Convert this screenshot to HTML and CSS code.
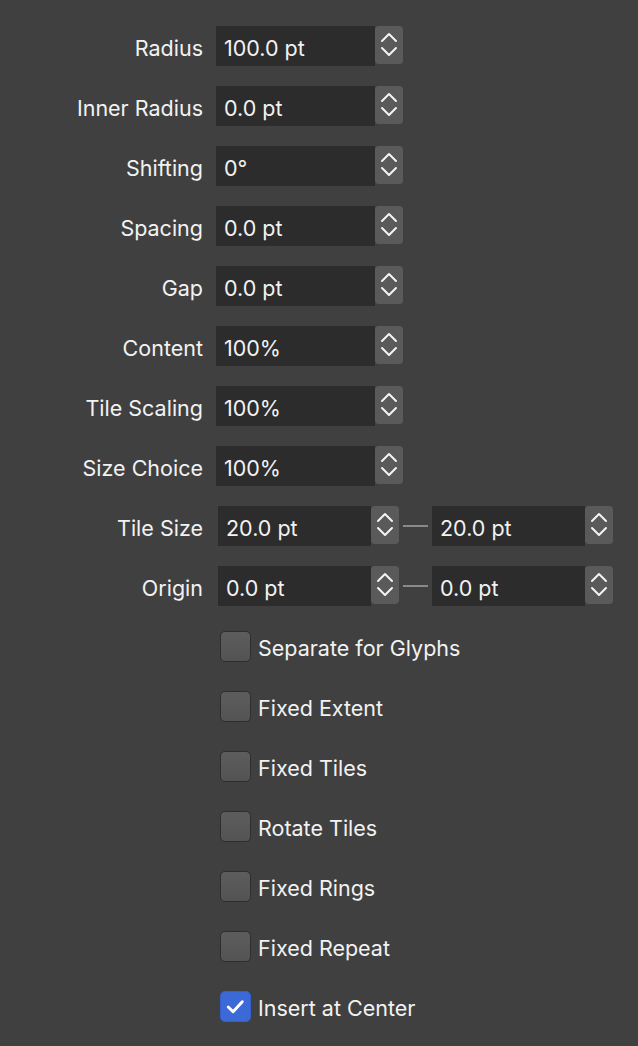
FILE: index.html
```html
<!DOCTYPE html>
<html lang="en">
<head>
    <meta charset="UTF-8">
    <title>Ring Properties</title>
    <link rel="stylesheet" href="styles.css">
</head>
<body>

    <div class="panel">
        <div class="row"><span class="label">Radius</span><div class="field"><span class="value">100.0 pt</span><span class="stepper"><svg viewBox="0 0 28 38"><path d="M7 15 L14 8 L21 15 M7 22 L14 29 L21 22"/></svg></span></div></div>
        <div class="row"><span class="label">Inner Radius</span><div class="field"><span class="value">0.0 pt</span><span class="stepper"><svg viewBox="0 0 28 38"><path d="M7 15 L14 8 L21 15 M7 22 L14 29 L21 22"/></svg></span></div></div>
        <div class="row"><span class="label">Shifting</span><div class="field"><span class="value">0°</span><span class="stepper"><svg viewBox="0 0 28 38"><path d="M7 15 L14 8 L21 15 M7 22 L14 29 L21 22"/></svg></span></div></div>
        <div class="row"><span class="label">Spacing</span><div class="field"><span class="value">0.0 pt</span><span class="stepper"><svg viewBox="0 0 28 38"><path d="M7 15 L14 8 L21 15 M7 22 L14 29 L21 22"/></svg></span></div></div>
        <div class="row"><span class="label">Gap</span><div class="field"><span class="value">0.0 pt</span><span class="stepper"><svg viewBox="0 0 28 38"><path d="M7 15 L14 8 L21 15 M7 22 L14 29 L21 22"/></svg></span></div></div>
        <div class="row"><span class="label">Content</span><div class="field"><span class="value">100%</span><span class="stepper"><svg viewBox="0 0 28 38"><path d="M7 15 L14 8 L21 15 M7 22 L14 29 L21 22"/></svg></span></div></div>
        <div class="row"><span class="label">Tile Scaling</span><div class="field"><span class="value">100%</span><span class="stepper"><svg viewBox="0 0 28 38"><path d="M7 15 L14 8 L21 15 M7 22 L14 29 L21 22"/></svg></span></div></div>
        <div class="row"><span class="label">Size Choice</span><div class="field"><span class="value">100%</span><span class="stepper"><svg viewBox="0 0 28 38"><path d="M7 15 L14 8 L21 15 M7 22 L14 29 L21 22"/></svg></span></div></div>

        <div class="row pair"><span class="label">Tile Size</span>
            <div class="field small"><span class="value">20.0 pt</span><span class="stepper"><svg viewBox="0 0 28 38"><path d="M7 15 L14 8 L21 15 M7 22 L14 29 L21 22"/></svg></span></div>
            <span class="dash"></span>
            <div class="field small"><span class="value">20.0 pt</span><span class="stepper"><svg viewBox="0 0 28 38"><path d="M7 15 L14 8 L21 15 M7 22 L14 29 L21 22"/></svg></span></div>
        </div>
        <div class="row pair"><span class="label">Origin</span>
            <div class="field small"><span class="value">0.0 pt</span><span class="stepper"><svg viewBox="0 0 28 38"><path d="M7 15 L14 8 L21 15 M7 22 L14 29 L21 22"/></svg></span></div>
            <span class="dash"></span>
            <div class="field small"><span class="value">0.0 pt</span><span class="stepper"><svg viewBox="0 0 28 38"><path d="M7 15 L14 8 L21 15 M7 22 L14 29 L21 22"/></svg></span></div>
        </div>

        <label class="row check"><span class="box"></span><span class="text">Separate for Glyphs</span></label>
        <label class="row check"><span class="box"></span><span class="text">Fixed Extent</span></label>
        <label class="row check"><span class="box"></span><span class="text">Fixed Tiles</span></label>
        <label class="row check"><span class="box"></span><span class="text">Rotate Tiles</span></label>
        <label class="row check"><span class="box"></span><span class="text">Fixed Rings</span></label>
        <label class="row check"><span class="box"></span><span class="text">Fixed Repeat</span></label>
        <label class="row check"><span class="box checked"><svg viewBox="0 0 30 30"><path d="M7.5 15.5 L12.5 20.5 L22 10"/></svg></span><span class="text">Insert at Center</span></label>
    </div>

</body>
</html>
```

FILE: styles.css
```css
body {
    background-color: #404040;
    margin: 0;
    font-family: Inter, "Noto Sans", sans-serif;
    font-size: 21.5px;
    color: #f2f2f2;
}

.panel {
    padding-top: 16px;
}

.row {
    display: flex;
    align-items: center;
    height: 60px;
    gap: 13px;
}

.label {
    width: 203px;
    text-align: right;
    flex: none;
    padding-top: 4px;
}

.field {
    display: flex;
    align-items: flex-start;
    height: 40px;
}

.value {
    box-sizing: border-box;
    width: 159px;
    height: 40px;
    line-height: 36px;
    padding: 4px 0 0 8px;
    background-color: #2c2c2c;
}

.stepper {
    width: 28px;
    height: 38px;
    background-color: #5a5a5a;
    border-radius: 4px;
}

.stepper svg {
    display: block;
    width: 28px;
    height: 38px;
    fill: none;
    stroke: #f4f4f4;
    stroke-width: 2;
    stroke-linecap: round;
    stroke-linejoin: round;
}

.pair {
    gap: 4px;
}

.pair .label {
    margin-right: 11px;
}

.field.small .value {
    width: 153px;
}

.dash {
    width: 25px;
    height: 2px;
    background-color: #8a8a8a;
}

.check {
    padding-left: 220px;
    gap: 7px;
}

.check .text {
    padding-top: 3px;
}

.box {
    width: 29px;
    height: 29px;
    border: 1px solid #2e2e2e;
    border-radius: 5px;
    background: linear-gradient(#5d5d5d, #535353);
}

.box.checked {
    border-color: #3560c9;
    background: #3c69d8;
}

.box svg {
    display: block;
    width: 29px;
    height: 29px;
    fill: none;
    stroke: #ffffff;
    stroke-width: 3;
    stroke-linecap: round;
    stroke-linejoin: round;
}
```
